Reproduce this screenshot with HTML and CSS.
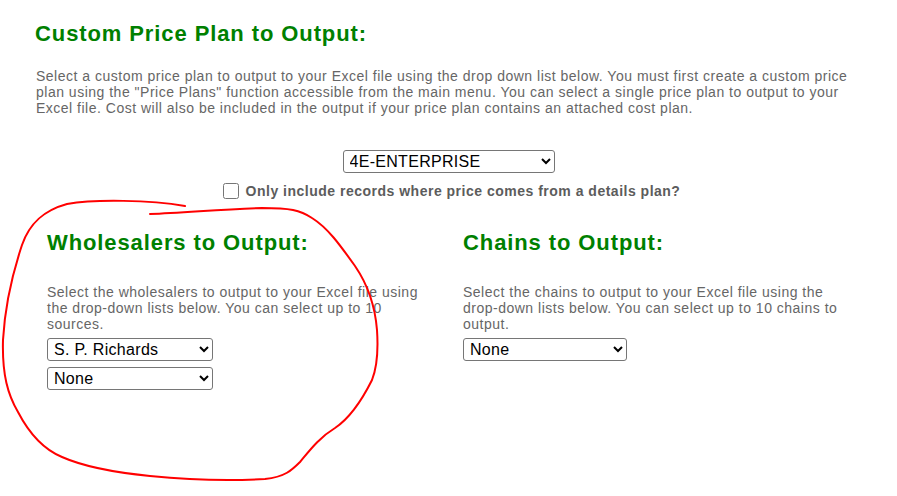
FILE: index.html
```html
<!DOCTYPE html>
<html lang="en">

<head>
  <meta charset="UTF-8">
  <meta name="viewport" content="width=device-width, initial-scale=1.0">
  <title>Export Options</title>
  <link rel="stylesheet" href="styles.css">
</head>

<body>
  <div class="page">
    <section class="plan">
      <h1>Custom Price Plan to Output:</h1>
      <p class="intro">Select a custom price plan to output to your Excel file using the drop down list below. You must first create a custom price plan using the "Price Plans" function accessible from the main menu. You can select a single price plan to output to your Excel file. Cost will also be included in the output if your price plan contains an attached cost plan.</p>
    </section>

    <div class="plan-picker">
      <select name="priceplan" class="plan-select">
        <option>4E-ENTERPRISE</option>
      </select>
      <label class="details-only">
        <input type="checkbox" name="detailsonly">
        <span>Only include records where price comes from a details plan?</span>
      </label>
    </div>

    <div class="columns">
      <section class="col">
        <h2>Wholesalers to Output:</h2>
        <p>Select the wholesalers to output to your Excel file using the drop-down lists below. You can select up to 10 sources.</p>
        <div class="selects">
          <select name="wholesaler1">
            <option>S. P. Richards</option>
          </select>
          <select name="wholesaler2">
            <option>None</option>
          </select>
        </div>
      </section>
      <section class="col">
        <h2>Chains to Output:</h2>
        <p>Select the chains to output to your Excel file using the drop-down lists below. You can select up to 10 chains to output.</p>
        <div class="selects">
          <select name="chain1" class="narrow">
            <option>None</option>
          </select>
        </div>
      </section>
    </div>
  </div>

  <!-- hand drawn markup over the screenshot -->
  <svg class="scribble" width="897" height="496" viewBox="0 0 897 496">
    <path d="M185,206 C150,200 95,199 67,204 C45,210 30,222 22,245 C12,275 5,305 3,340 C2,375 8,395 18,412 C30,435 45,450 62,457 C80,465 110,472 150,476 C190,480 230,481 265,479 C285,477 292,470 300,462 C310,450 320,437 335,428 C350,418 362,400 372,380 C378,365 378,345 377,330 C375,305 368,285 355,266 C340,245 328,228 312,218 C300,210 290,208 262,208 C220,209 185,213 150,214" fill="none" stroke="#f00" stroke-width="2" stroke-linecap="round" />
  </svg>
</body>

</html>
```

FILE: styles.css
```css
* {
  font-family: 'Liberation Sans', Arial, Helvetica, sans-serif;
}

body {
  margin: 0;
  background: #fff;
}

.page {
  padding-top: 21px;
}

h1,
h2 {
  margin: 0;
  font-size: 22px;
  font-weight: bold;
  color: #008000;
  line-height: 25px;
  letter-spacing: 0.9px;
}

p {
  margin: 0;
  font-size: 14px;
  line-height: 16px;
  color: #666;
  letter-spacing: 0.5px;
}

.plan {
  padding-left: 35px;
}

.plan>p.intro {
  margin-top: 22px;
  width: 820px;
  padding-left: 1px;
}

.plan-picker {
  display: flex;
  flex-direction: column;
  align-items: center;
  gap: 10px;
  margin-top: 34px;
}

select {
  height: 23px;
  padding: 0 2px;
  font-size: 16px;
  letter-spacing: 0.3px;
  color: #000;
  background: #fff;
  border: 1px solid #767676;
  border-radius: 3px;
}

.plan-select {
  width: 212px;
}

.details-only {
  display: flex;
  align-items: center;
  gap: 7px;
  font-size: 14px;
  font-weight: bold;
  letter-spacing: 0.5px;
  color: #5c5c5c;
  margin-left: 6px;
}

.details-only>input {
  width: 16px;
  height: 16px;
  margin: 0;
}

.columns {
  display: grid;
  grid-template-columns: 380px 380px;
  column-gap: 36px;
  padding-left: 47px;
  margin-top: 31px;
}

.col>p {
  margin-top: 29px;
}

.selects {
  display: flex;
  flex-direction: column;
  align-items: flex-start;
  gap: 6px;
  margin-top: 6px;
}

.selects>select {
  width: 166px;
}

.selects>select.narrow {
  width: 164px;
}

.scribble {
  position: absolute;
  top: 0;
  left: 0;
  pointer-events: none;
}
```
